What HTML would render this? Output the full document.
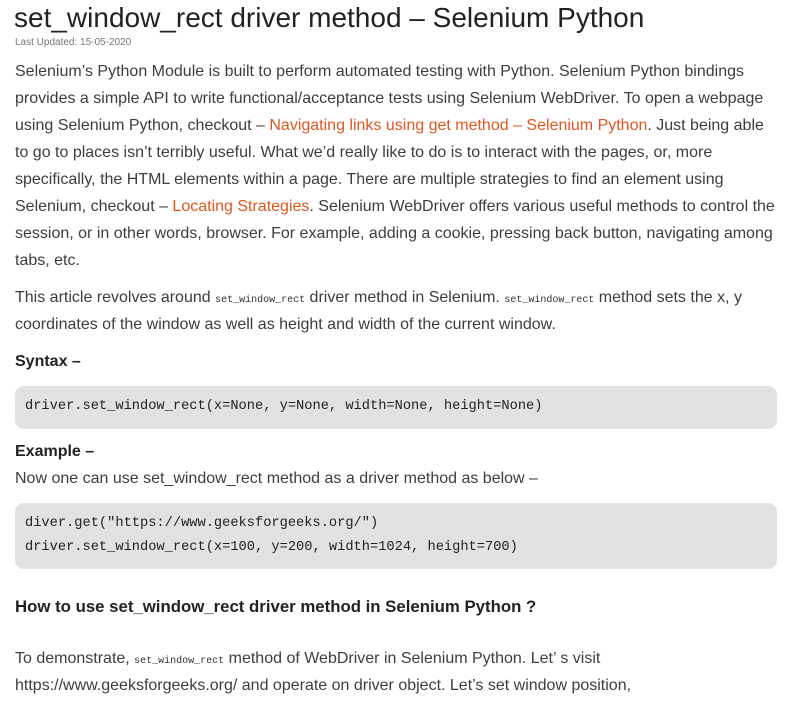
<!DOCTYPE html>
<html><head><meta charset="utf-8"><style>
body{margin:0;background:#fff;width:803px;height:704px;overflow:hidden;position:relative;font-family:"Liberation Sans",Arial,sans-serif;color:#3d3d3d}
.l{position:absolute;left:15px;white-space:nowrap;font-size:16px;line-height:20px}
a{color:#e0561f;text-decoration:none}
code{font-family:"Liberation Mono",monospace;font-size:10px;color:#333}
.b{font-weight:bold;color:#222}
.box{position:absolute;left:15px;width:762px;background:#e2e2e2;border-radius:9px}
.m{position:absolute;left:25px;white-space:nowrap;font-family:"Liberation Mono",monospace;font-size:13.7px;color:#222;line-height:20px}
</style></head><body>
<div style="position:absolute;left:14px;top:0px;font-size:28px;line-height:36px;color:#222;white-space:nowrap">set_window_rect driver method – Selenium Python</div>
<div style="position:absolute;left:15px;top:37px;font-size:10px;color:#777;white-space:nowrap">Last Updated: 15-05-2020</div>
<div class="l" style="top:62px">Selenium’s Python Module is built to perform automated testing with Python. Selenium Python bindings</div>
<div class="l" style="top:89px">provides a simple API to write functional/acceptance tests using Selenium WebDriver. To open a webpage</div>
<div class="l" style="top:116px">using Selenium Python, checkout – <a>Navigating links using get method – Selenium Python</a>. Just being able</div>
<div class="l" style="top:143px">to go to places isn’t terribly useful. What we’d really like to do is to interact with the pages, or, more</div>
<div class="l" style="top:170px">specifically, the HTML elements within a page. There are multiple strategies to find an element using</div>
<div class="l" style="top:197px">Selenium, checkout – <a>Locating Strategies</a>. Selenium WebDriver offers various useful methods to control the</div>
<div class="l" style="top:224px">session, or in other words, browser. For example, adding a cookie, pressing back button, navigating among</div>
<div class="l" style="top:251px">tabs, etc.</div>
<div class="l" style="top:288px">This article revolves around <code>set_window_rect</code> driver method in Selenium. <code>set_window_rect</code> method sets the x, y</div>
<div class="l" style="top:315px">coordinates of the window as well as height and width of the current window.</div>
<div class="l b" style="top:352px">Syntax –</div>
<div class="box" style="top:386px;height:43px"></div>
<div class="m" style="top:397px">driver.set_window_rect(x=None, y=None, width=None, height=None)</div>
<div class="l b" style="top:442px">Example –</div>
<div class="l" style="top:469px">Now one can use set_window_rect method as a driver method as below –</div>
<div class="box" style="top:503px;height:66px"></div>
<div class="m" style="top:514px">diver.get("https://www.geeksforgeeks.org/")</div>
<div class="m" style="top:538px">driver.set_window_rect(x=100, y=200, width=1024, height=700)</div>
<div class="l b" style="top:597px;font-size:16.8px">How to use set_window_rect driver method in Selenium Python ?</div>
<div class="l" style="top:649px">To demonstrate, <code>set_window_rect</code> method of WebDriver in Selenium Python. Let’ s visit</div>
<div class="l" style="top:676px">https://www.geeksforgeeks.org/ and operate on driver object. Let’s set window position,</div>
</body></html>
